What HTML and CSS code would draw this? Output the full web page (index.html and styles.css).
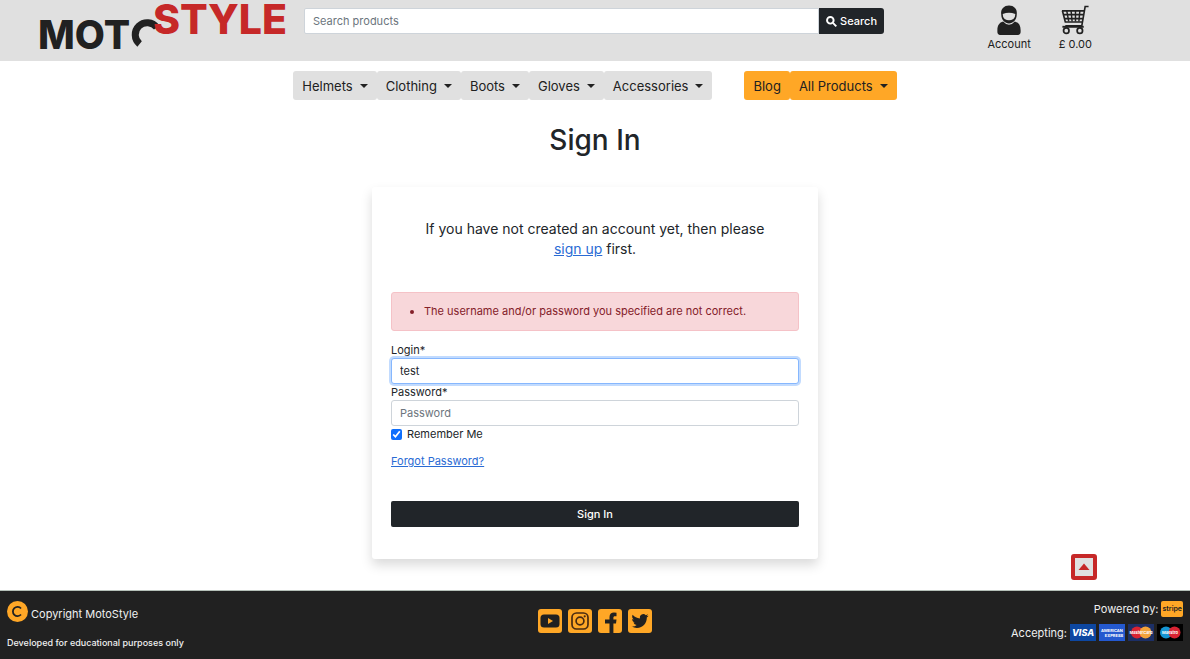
FILE: index.html
```html
<!DOCTYPE html>
<html lang="en">
<head>
<meta charset="utf-8">
<meta name="viewport" content="width=device-width, initial-scale=1">
<title>MotoStyle - Sign In</title>
<link rel="stylesheet" href="styles.css">
</head>
<body>
<header class="site-header">
  <a class="logo" href="#" aria-label="MotoStyle home">
    <svg width="251" height="52" viewBox="0 0 251 52">
      <text class="logo-moto" x="0" y="49">MOT</text>
      <path d="M101.600 44A12 12 0 1 1 118.800 27.500" fill="none" stroke="#212121" stroke-width="7"/>
      <text class="logo-style" x="115" y="34">STYLE</text>
    </svg>
  </a>
  <form class="search">
    <input class="search-input" type="search" placeholder="Search products" aria-label="Search products">
    <button class="search-button" type="button">
      <svg width="11" height="11" viewBox="0 0 16 16" fill="none" stroke="currentColor" stroke-width="2.8"><circle cx="6.3" cy="6.3" r="4.8"/><path d="M10 10l5 5"/></svg>
      Search
    </button>
  </form>
  <div class="shortcuts">
    <a class="shortcut" href="#">
      <svg width="26" height="31" viewBox="0 0 26 32"><path d="M5 10C4 4 8 0.500 13 0.500S22 4 21 10C21 15 17 19 13 19S5 15 5 10Z" fill="#212121"/><path d="M6.500 9.200Q13 6.700 19.500 9.200Q19.500 13 17.500 14.500Q13 17 8.500 14.500Q6.500 13 6.500 9.200Z" fill="#e0e0e0"/><path d="M7 17C3 18 1 21 1 26V28C1 30 3 31 5 31H21C23 31 25 30 25 28V26C25 21 23 18 19 17Q16 20.500 13 20.500T7 17Z" fill="#212121"/></svg>
      <span>Account</span>
    </a>
    <a class="shortcut" href="#">
      <svg width="30" height="31" viewBox="0 0 30 32" fill="none" stroke="#212121"><path d="M29 1.500H25.500L22 21.500H5M1.500 6H24.500M2 6L5 17.500H22M3 10H23.500M4 14H23" stroke-width="1.700"/><path d="M6.500 6L8.500 17M11 6L12 17M15.500 6V17M20 6L19 17" stroke-width="1.500"/><path d="M2 22.500H24" stroke-width="2"/><circle cx="6" cy="26.500" r="2.800" stroke-width="1.800"/><circle cx="20" cy="26.500" r="2.800" stroke-width="1.800"/></svg>
      <span>£ 0.00</span>
    </a>
  </div>
</header>

<nav class="site-nav" aria-label="Main">
  <div class="nav-group">
    <button class="nav-button caret" type="button">Helmets</button>
    <button class="nav-button caret" type="button">Clothing</button>
    <button class="nav-button caret" type="button">Boots</button>
    <button class="nav-button caret" type="button">Gloves</button>
    <button class="nav-button caret" type="button">Accessories</button>
  </div>
  <div class="nav-group">
    <a class="nav-button accent" href="#">Blog</a>
    <button class="nav-button accent caret" type="button">All Products</button>
  </div>
</nav>

<main class="content">
  <h1 class="title">Sign In</h1>
  <section class="card">
    <p class="intro">If you have not created an account yet, then please <a href="#">sign up</a> first.</p>
    <div class="alert" role="alert">
      <ul class="alert-list"><li>The username and/or password you specified are not correct.</li></ul>
    </div>
    <form class="login-form">
      <label class="label" for="login">Login*</label>
      <input class="field focused" id="login" type="text" value="test">
      <label class="label" for="password">Password*</label>
      <input class="field" id="password" type="password" placeholder="Password">
      <div class="remember">
        <input class="checkbox" id="remember" type="checkbox" checked>
        <label for="remember">Remember Me</label>
      </div>
      <a class="forgot" href="#">Forgot Password?</a>
      <button class="submit" type="button">Sign In</button>
    </form>
  </section>
</main>

<button class="to-top" type="button" aria-label="Back to top">
  <svg width="12" height="8" viewBox="0 0 12 8"><path d="M6 .5L11.500 7H.5Z" fill="#c62828"/></svg>
</button>

<footer class="site-footer">
  <div class="footer-about">
    <p class="copyright">
      <svg width="21" height="21" viewBox="0 0 21 21"><circle cx="10.500" cy="10.500" r="10.500" fill="#ffa726"/><path d="M14 7.500A4.600 4.600 0 1 0 14 13.500" fill="none" stroke="#212121" stroke-width="1.800"/></svg>
      <span>Copyright MotoStyle</span>
    </p>
    <p class="purpose">Developed for educational purposes only</p>
  </div>
  <div class="social">
    <a href="#" aria-label="YouTube"><svg viewBox="0 0 24 24"><rect width="24" height="24" rx="3" fill="#ffa726"/><rect x="2.500" y="5.500" width="19" height="13" rx="3.500" fill="#212121"/><path d="M10 9v6l5-3z" fill="#ffa726"/></svg></a>
    <a href="#" aria-label="Instagram"><svg viewBox="0 0 24 24"><rect width="24" height="24" rx="3" fill="#ffa726"/><g fill="none" stroke="#4a2b12" stroke-width="1.700"><rect x="4" y="4" width="16" height="16" rx="4.500"/><circle cx="12" cy="12" r="3.900"/></g><circle cx="16.700" cy="7.300" r="1.100" fill="#4a2b12"/></svg></a>
    <a href="#" aria-label="Facebook"><svg viewBox="0 0 24 24"><rect width="24" height="24" rx="3" fill="#ffa726"/><path d="M11.500 24V14.500H7V10.500H11.500V8C11.500 4.800 13.500 3.500 16 3.500L18.500 3.700V7.200H17C15.700 7.200 15.400 7.900 15.400 8.800V10.500H18.500L18 14.500H15.400V24Z" fill="#212121"/></svg></a>
    <a href="#" aria-label="Twitter"><svg viewBox="0 0 24 24"><rect width="24" height="24" rx="3" fill="#ffa726"/><path transform="translate(3.500 3.500) scale(.71)" d="M23.950 4.570a10 10 0 0 1-2.820.77 4.960 4.960 0 0 0 2.160-2.720c-.95.560-2 .960-3.130 1.180a4.920 4.920 0 0 0-8.380 4.480C7.690 8.090 4.070 6.130 1.640 3.160a4.820 4.820 0 0 0-.67 2.470c0 1.710.87 3.210 2.190 4.100a4.900 4.900 0 0 1-2.230-.62v.06a4.920 4.920 0 0 0 3.950 4.830 5 5 0 0 1-2.210.08 4.940 4.940 0 0 0 4.600 3.420A9.870 9.870 0 0 1 0 19.540a14 14 0 0 0 7.550 2.210c9.050 0 14-7.500 14-13.980 0-.21 0-.42-.02-.63a9.940 9.940 0 0 0 2.420-2.570z" fill="#212121"/></svg></a>
  </div>
  <div class="payments">
    <div class="payment-row"><span>Powered by:</span><span class="stripe">stripe</span></div>
    <div class="payment-row">
      <span>Accepting:</span>
      <svg width="26" height="17" viewBox="0 0 26 17" role="img" aria-label="Visa"><rect width="26" height="17" fill="#0d47a1"/><text class="visa" x="13" y="12" text-anchor="middle">VISA</text></svg>
      <svg width="26" height="17" viewBox="0 0 26 17" role="img" aria-label="American Express"><rect width="26" height="17" fill="#2459cf"/><text class="amex" x="13" y="8" text-anchor="middle">AMERICAN</text><text class="amex" x="15" y="13" text-anchor="middle">EXPRESS</text></svg>
      <svg width="26" height="17" viewBox="0 0 26 17" role="img" aria-label="MasterCard"><rect width="26" height="17" fill="#1c2f66"/><circle cx="9" cy="8.500" r="6" fill="#d92332"/><circle cx="17.500" cy="8.500" r="6" fill="#f2a33a"/><text class="card-name" x="13" y="10" text-anchor="middle">MasterCard</text></svg>
      <svg width="26" height="17" viewBox="0 0 26 17" role="img" aria-label="Maestro"><rect width="26" height="17" fill="#000"/><circle cx="9" cy="8.500" r="6" fill="#1595d3"/><circle cx="17.500" cy="8.500" r="6" fill="#d92332"/><text class="card-name" x="13" y="10" text-anchor="middle">Maestro</text></svg>
    </div>
  </div>
</footer>
</body>
</html>
```
FILE: styles.css
```css
* { box-sizing: border-box; }

body {
  margin: 0;
  min-height: 100vh;
  display: flex;
  flex-direction: column;
  font-family: Inter, "Noto Sans", sans-serif;
  font-size: 11px;
  line-height: 16px;
  color: #212529;
  background: #fff;
}

button, input { font: inherit; color: inherit; }
button { cursor: pointer; }
p, ul { margin: 0; }
svg { display: block; flex: none; overflow: visible; }
a { color: #2a6bd4; }

.site-header {
  display: grid;
  grid-template-columns: 251px minmax(200px, 580px) 1fr;
  column-gap: 15px;
  padding: 0 98px 9px 38px;
  background: #e0e0e0;
}
.logo-moto, .logo-style { font-weight: 800; }
.logo-moto { font-size: 39px; fill: #212121; }
.logo-style { font-size: 41px; fill: #c62828; }

.search { display: flex; align-items: flex-start; padding-top: 8px; }
.search-input {
  flex: 1;
  min-width: 0;
  height: 26px;
  padding: 0 8px;
  border: 1px solid #ced4da;
  border-radius: 2px 0 0 2px;
  background: #fff;
  appearance: none;
}
::placeholder { color: #6c757d; opacity: 1; }
.search-button {
  display: flex;
  align-items: center;
  gap: 3px;
  height: 26px;
  padding: 0 7px;
  border: 0;
  border-radius: 0 3px 3px 0;
  background: #212529;
  color: #fff;
  font-weight: 500;
}

.shortcuts { display: flex; justify-content: flex-end; gap: 28px; padding-top: 5px; }
.shortcut {
  display: flex;
  flex-direction: column;
  align-items: center;
  color: #212121;
  text-decoration: none;
}

.site-nav { display: flex; justify-content: center; gap: 32px; padding-top: 10px; }
.nav-group { display: flex; }
.nav-button {
  display: flex;
  align-items: center;
  height: 29px;
  padding: 0 9px;
  border: 0;
  border-radius: 3px;
  background: #e0e0e0;
  color: #212121;
  font-size: 13px;
  text-decoration: none;
}
.accent { background: #ffa726; }
.caret::after {
  content: "";
  margin-left: 7px;
  border-top: 4px solid;
  border-left: 4px solid transparent;
  border-right: 4px solid transparent;
}

.content { flex: 1; padding: 20px 16px 31px; }
.title {
  margin: 0 0 27px;
  font-size: 28px;
  line-height: 40px;
  font-weight: 500;
  text-align: center;
}
.card {
  max-width: 446px;
  margin: 0 auto;
  padding: 32px 19px;
  border-radius: 3px;
  background: #fff;
  box-shadow: 0 6px 12px rgba(0, 0, 0, .15);
}
.intro {
  padding: 0 24px;
  margin-bottom: 33px;
  font-size: 14px;
  line-height: 20px;
  text-align: center;
}
.alert {
  margin-bottom: 11px;
  padding: 10px 11px 11px;
  border: 1px solid #f5c2c7;
  border-radius: 3px;
  background: #f8d7da;
  color: #842029;
}
.alert-list { padding-left: 21px; }

.login-form { display: flex; flex-direction: column; }
.field {
  width: 100%;
  height: 26px;
  padding: 0 8px;
  border: 1px solid #ced4da;
  border-radius: 3px;
  background: #fff;
  outline: 0;
}
.focused { border-color: #86b7fe; box-shadow: 0 0 0 2px #c2dbfe; }
.remember { display: flex; align-items: center; gap: 5px; }
.checkbox { width: 11px; height: 11px; margin: 0; accent-color: #0d6efd; }
.forgot { align-self: flex-start; margin: 11px 0 32px; }
.submit {
  height: 26px;
  border: 0;
  border-radius: 2px;
  background: #212529;
  color: #fff;
  font-weight: 500;
}

.to-top {
  position: fixed;
  right: 93px;
  bottom: 79px;
  display: grid;
  place-items: center;
  width: 26px;
  height: 26px;
  padding: 0;
  border: 4px solid #c62828;
  border-radius: 3px;
  background: #e0e0e0;
}

.site-footer {
  display: grid;
  grid-template-columns: 1fr auto 1fr;
  padding: 10px 7px 8px;
  border-top: 1px solid #b5c0b8;
  background: #212121;
  color: #f0f0f0;
}
.copyright { display: flex; align-items: flex-end; gap: 3px; margin-bottom: 13px; }
.purpose { font-size: 9px; font-weight: 500; }
.social { display: flex; gap: 6px; padding-top: 8px; }
.social a, .social svg { display: block; width: 24px; height: 24px; }
.payments { display: flex; flex-direction: column; align-items: flex-end; gap: 7px; }
.payment-row { display: flex; align-items: center; gap: 3px; }
.payment-row svg { overflow: hidden; }
.stripe {
  padding: 0 1px;
  border-radius: 2px;
  background: #ffa726;
  color: #212121;
  font-size: 7px;
  font-weight: 600;
}
.visa { font-size: 9px; font-weight: 800; font-style: italic; fill: #fff; }
.amex { font-size: 4px; font-weight: 700; fill: #fff; }
.card-name { font-size: 4px; font-weight: 700; fill: #fff; }
```
